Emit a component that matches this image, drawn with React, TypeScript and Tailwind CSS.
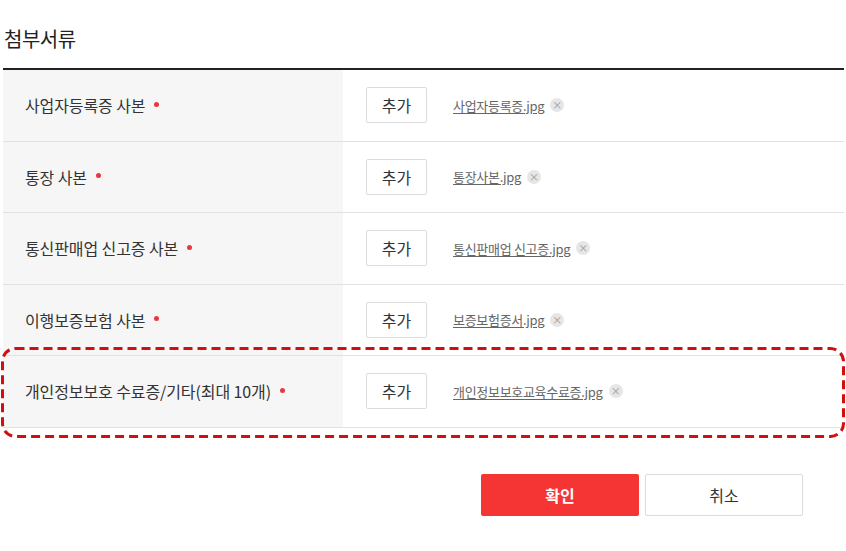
import React from 'react';

const rows = [
  { label: '사업자등록증 사본', file: '사업자등록증.jpg' },
  { label: '통장 사본', file: '통장사본.jpg' },
  { label: '통신판매업 신고증 사본', file: '통신판매업 신고증.jpg' },
  { label: '이행보증보험 사본', file: '보증보험증서.jpg' },
  { label: '개인정보보호 수료증/기타(최대 10개)', file: '개인정보보호교육수료증.jpg', marked: true },
];

const Row = ({ label, file }) => (
  <div className="flex h-[71.5px] border-b border-[#e2e2e2]">
    <div className="w-[340px] shrink-0 bg-[#f6f6f6] flex items-center pl-[22px] text-[16px] text-[#333] tracking-[-0.1px]">
      <span>{label}</span>
      <span className="ml-[9px] h-[5px] w-[5px] rounded-full bg-[#e8383d] -translate-y-[1px]" />
    </div>
    <div className="flex-1 flex items-center pl-[23px]">
      <button className="h-[36px] w-[61px] border border-[#dcdcdc] rounded-[2px] bg-white text-[16px] text-[#333]">추가</button>
      <a className="ml-[26px] text-[13px] text-[#666] underline underline-offset-2 tracking-[-0.3px]">{file}</a>
      <span className="ml-[6px] flex h-[14px] w-[14px] items-center justify-center rounded-full bg-[#e6e6e6] text-[10px] leading-none text-[#999]">×</span>
    </div>
  </div>
);

export default function App() {
  return (
    <div className="w-[846px] h-[551px] bg-white font-['Noto_Sans_CJK_KR','Noto_Sans',sans-serif]">
      <div className="pl-[3px] pr-[2px]">
        <h2 className="h-[68px] flex items-center pl-[1px] pt-[10px] text-[20px] text-[#222] tracking-[-0.5px]">첨부서류</h2>
        <div className="border-t-[2px] border-[#222]">
          {rows.map((r, i) =>
            r.marked ? (
              <div key={i} className="relative">
                <Row {...r} />
                <svg className="absolute -top-[9px] -left-[2px] pointer-events-none overflow-visible" width="844" height="91">
                  <rect x="1.5" y="1.5" width="841" height="88" rx="13" fill="none" stroke="#d10f0f" strokeWidth="3" strokeDasharray="9 5" />
                </svg>
              </div>
            ) : (
              <Row key={i} {...r} />
            )
          )}
        </div>
      </div>
      <div className="flex gap-[6px] pl-[481px] mt-[46px]">
        <button className="h-[42px] w-[158px] rounded-[2px] bg-[#f53434] text-[16px] font-bold text-white">확인</button>
        <button className="h-[42px] w-[158px] rounded-[2px] border border-[#dcdcdc] bg-white text-[16px] text-[#333]">취소</button>
      </div>
    </div>
  );
}
